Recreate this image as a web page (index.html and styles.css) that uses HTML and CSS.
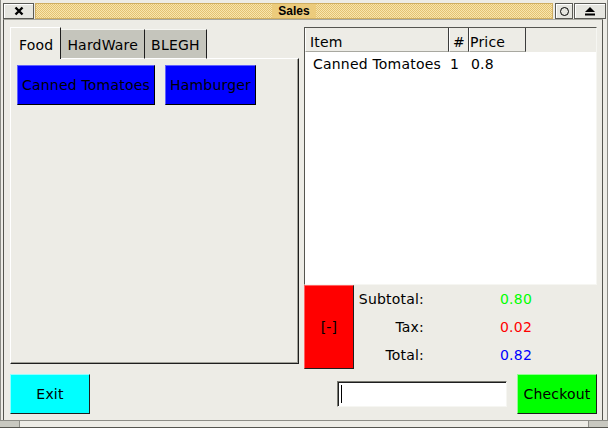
FILE: index.html
```html
<!DOCTYPE html>
<html>
<head>
<meta charset="utf-8">
<link rel="stylesheet" href="styles.css">
</head>
<body>
<div class="window">
  <div class="titlebar">
    <div class="tb-btn tb-close">
      <svg width="10" height="10" viewBox="0 0 10 10"><path d="M1.5 1.5 L8.5 8.5 M8.5 1.5 L1.5 8.5" stroke="#000" stroke-width="2.4" fill="none"/></svg>
    </div>
    <div class="tb-title"><span class="tb-text">Sales</span></div>
    <div class="tb-btn tb-min">
      <svg width="11" height="11" viewBox="0 0 11 11"><circle cx="5.5" cy="5.5" r="4" stroke="#000" stroke-width="1" fill="none"/></svg>
    </div>
    <div class="tb-btn tb-max">
      <svg width="12" height="10" viewBox="0 0 12 10"><polygon points="1,6 6,1 11,6" fill="#000"/><rect x="1" y="7.5" width="10" height="2" fill="#000"/></svg>
    </div>
  </div>
  <div class="client">
    <div class="main">
      <div class="left">
        <div class="tabs">
          <div class="tab active">Food</div>
          <div class="tab">HardWare</div>
          <div class="tab">BLEGH</div>
          <div class="tab-fill"></div>
        </div>
        <div class="panel">
          <button class="btn item-btn">Canned Tomatoes</button>
          <button class="btn item-btn">Hamburger</button>
        </div>
      </div>
      <div class="right">
        <div class="table">
          <div class="thead">
            <div class="th th-item">Item</div>
            <div class="th th-qty">#</div>
            <div class="th th-price">Price</div>
          </div>
          <div class="tbody">
            <div class="tr">
              <span class="td td-item">Canned Tomatoes</span>
              <span class="td td-qty">1</span>
              <span class="td td-price">0.8</span>
            </div>
          </div>
        </div>
        <div class="totals">
          <button class="btn remove-btn">[-]</button>
          <div class="sums">
            <span class="label">Subtotal:</span><span class="value green">0.80</span>
            <span class="label">Tax:</span><span class="value red">0.02</span>
            <span class="label">Total:</span><span class="value blue">0.82</span>
          </div>
        </div>
      </div>
      <div class="bottom">
        <button class="btn exit-btn">Exit</button>
        <div class="field"><span class="caret"></span></div>
        <button class="btn checkout-btn">Checkout</button>
      </div>
    </div>
  </div>
  <div class="statusbar">
    <span class="grip"></span>
    <span class="grip grip-right"></span>
  </div>
</div>
</body>
</html>
```

FILE: styles.css
```css
* { box-sizing: border-box; }
html, body { margin: 0; padding: 0; }
body {
  width: 608px;
  height: 428px;
  overflow: hidden;
  background: #edece6;
  font-family: "DejaVu Sans", sans-serif;
  font-size: 14px;
  letter-spacing: 0.2px;
  color: #000;
}
.window {
  width: 608px;
  height: 428px;
  display: flex;
  flex-direction: column;
  border-left: 1px solid #8c8c86;
  border-right: 1px solid #8c8c86;
}

/* title bar */
.titlebar {
  height: 19px;
  display: flex;
  align-items: flex-start;
  padding-top: 3px;
}
.tb-btn {
  height: 16px;
  display: flex;
  align-items: center;
  justify-content: center;
  background: #e6e6e0;
  border: 1px solid #5a5a55;
  box-shadow: inset 1px 1px 0 #ffffff;
}
.tb-close { width: 31px; margin-left: 2px; }
.tb-min { width: 18px; margin-left: 2px; }
.tb-max { width: 32px; margin-left: 1px; margin-right: 1px; }
.tb-title {
  flex: 1;
  height: 16px;
  margin-left: 1px;
  display: flex;
  align-items: center;
  justify-content: center;
  border: 1px solid #cfae62;
  background-color: #ecce84;
  background-image: conic-gradient(#f8e6ad 25%, #e4c172 0 50%, #f8e6ad 0 75%, #e4c172 0);
  background-size: 2px 2px;
}
.tb-text {
  background: #eccb7c;
  padding: 0 6px;
  height: 14px;
  line-height: 14px;
  font-family: "Liberation Sans", Arial, sans-serif;
  font-weight: bold;
  font-size: 12px;
  letter-spacing: 0;
}

/* client area */
.client {
  flex: 1;
  margin-left: 2px;
  margin-right: 4px;
  border-left: 1px solid #55554f;
  border-right: 1px solid #55554f;
  border-top: 1px solid #a8a8a0;
}
.main {
  display: grid;
  grid-template-columns: 289px 293px;
  grid-template-rows: 342px 40px;
  column-gap: 5px;
  row-gap: 5px;
  padding: 7px 5px 6px 6px;
}

/* left tabs */
.left { display: flex; flex-direction: column; }
.tabs {
  height: 32px;
  display: flex;
  align-items: flex-end;
}
.tab {
  height: 30px;
  display: flex;
  align-items: flex-end;
  line-height: 17px;
  padding: 0 6px 4px 6px;
  background: #c5c5bc;
  border-top: 1px solid #f6f6f2;
  border-right: 1px solid #1e1e1e;
  border-bottom: 1px solid #ffffff;
}
.tab.active {
  height: 32px;
  padding: 0 7px 5px 8px;
  background: #edece6;
  border-top: 1px solid #ffffff;
  border-left: 1px solid #ffffff;
  border-bottom: none;
}
.tab-fill {
  flex: 1;
  height: 1px;
  border-bottom: 1px solid #ffffff;
  border-right: 1px solid #1e1e1e;
}
.panel {
  height: 305px;
  display: flex;
  align-items: flex-start;
  gap: 10px;
  padding: 6px 0 0 6px;
  border-left: 1px solid #ffffff;
  border-right: 1px solid #1e1e1e;
  border-bottom: 1px solid #1e1e1e;
  box-shadow: inset -1px -1px 0 #a0a098;
}

/* buttons */
.btn {
  font: inherit;
  letter-spacing: inherit;
  color: #000;
  margin: 0;
  height: 40px;
  padding: 0 4px;
  border: 1px solid;
  cursor: default;
}
.item-btn {
  background: #0000ff;
  border-color: #6060ff #000000 #000000 #6060ff;
}
.remove-btn {
  width: 50px;
  height: 84px;
  background: #ff0000;
  border-color: #ff6060 #1e1e1e #1e1e1e #ff6060;
}
.exit-btn {
  width: 80px;
  background: #00ffff;
  border-color: #90ffff #1e1e1e #1e1e1e #90ffff;
}
.checkout-btn {
  width: 80px;
  margin-left: 10px;
  background: #00ff00;
  border-color: #90ff90 #1e1e1e #1e1e1e #90ff90;
}

/* right table */
.right { display: flex; flex-direction: column; }
.table {
  height: 258px;
  display: flex;
  flex-direction: column;
  border: 1px solid;
  border-color: #55554f #f6f6f2 #f6f6f2 #55554f;
}
.thead {
  height: 24px;
  display: flex;
  background: #edece6;
}
.th {
  display: flex;
  align-items: flex-end;
  line-height: 17px;
  padding-bottom: 0;
  border-right: 1px solid #3c3c3c;
  border-bottom: 1px solid #a8a8a0;
}
.th-item { width: 144px; padding-left: 4px; border-left: 1px solid #ffffff; }
.th-qty { width: 20px; justify-content: center; border-left: 1px solid #ffffff; }
.th-price { width: 57px; padding-left: 0; border-left: 1px solid #ffffff; }
.tbody {
  flex: 1;
  background: #ffffff;
  padding-top: 4px;
}
.tr { display: flex; line-height: 17px; }
.td-item { width: 144px; padding-left: 8px; }
.td-qty { width: 20px; padding-left: 1px; }
.td-price { padding-left: 2px; }

/* totals */
.totals {
  height: 84px;
  display: flex;
}
.sums {
  display: grid;
  grid-template-columns: 70px 108px;
  grid-auto-rows: 28px;
  align-items: center;
}
.label { text-align: right; }
.value { text-align: right; }
.green { color: #00ff00; }
.red { color: #ff0000; }
.blue { color: #0000ff; }

/* bottom row */
.bottom {
  grid-column: 1 / -1;
  display: flex;
  align-items: center;
}
.field {
  margin-left: auto;
  width: 170px;
  height: 26px;
  background: #ffffff;
  border: 1px solid;
  border-color: #7a7a72 #f6f6f2 #f6f6f2 #7a7a72;
  box-shadow: inset 1px 1px 0 #1e1e1e;
  display: flex;
  align-items: center;
  padding-left: 3px;
}
.caret {
  width: 1px;
  height: 18px;
  background: #000;
}

/* bottom frame strip */
.statusbar {
  height: 8px;
  display: flex;
  justify-content: space-between;
  border-top: 1px solid #8c8c86;
  border-bottom: 1px solid #55554f;
  margin-left: -1px;
  margin-right: -1px;
}
.grip {
  width: 20px;
  height: 100%;
  background: #c8c8c0;
  border-right: 1px solid #8c8c86;
}
.grip-right {
  border-right: none;
  border-left: 1px solid #8c8c86;
}
```
